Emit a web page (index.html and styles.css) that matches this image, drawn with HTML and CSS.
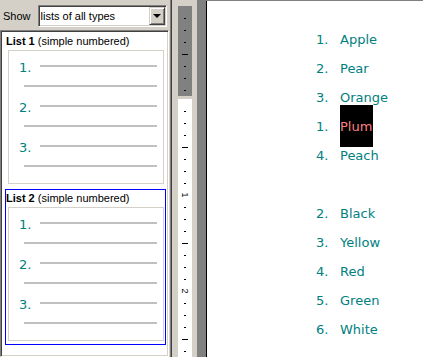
FILE: index.html
```html
<!DOCTYPE html>
<html lang="en">
<head>
    <meta charset="UTF-8">
    <meta name="viewport" content="width=device-width, initial-scale=1.0">
    <title>Lists</title>
    <link rel="stylesheet" href="styles.css">
</head>
<body>
    <div class="window">
        <div class="sidebar">
            <div class="toolbar">
                <span class="show-label">Show</span>
                <div class="select">
                    <span class="select-text">lists of all types</span>
                    <span class="select-btn"><span class="arrow"></span></span>
                </div>
            </div>
            <div class="panel">
                <div class="card">
                    <div class="card-title"><b>List 1</b> (simple numbered)</div>
                    <div class="preview">
                        <div class="row"><span class="num">1.</span><span class="line"></span></div>
                        <div class="row"><span class="line plain"></span></div>
                        <div class="row"><span class="num">2.</span><span class="line"></span></div>
                        <div class="row"><span class="line plain"></span></div>
                        <div class="row"><span class="num">3.</span><span class="line"></span></div>
                        <div class="row"><span class="line plain"></span></div>
                    </div>
                </div>
                <div class="card selected">
                    <div class="card-title"><b>List 2</b> (simple numbered)</div>
                    <div class="preview">
                        <div class="row"><span class="num">1.</span><span class="line"></span></div>
                        <div class="row"><span class="line plain"></span></div>
                        <div class="row"><span class="num">2.</span><span class="line"></span></div>
                        <div class="row"><span class="line plain"></span></div>
                        <div class="row"><span class="num">3.</span><span class="line"></span></div>
                        <div class="row"><span class="line plain"></span></div>
                    </div>
                </div>
            </div>
        </div>
        <div class="splitter"></div>
        <div class="ruler">
            <div class="ruler-margin">
                <div class="tick"><i></i></div>
                <div class="tick"><i></i></div>
                <div class="tick"><i></i></div>
                <div class="tick long"><i></i></div>
                <div class="tick"><i></i></div>
                <div class="tick"><i></i></div>
                <div class="tick"><i></i></div>
            </div>
            <div class="ruler-page">
                <div class="tick"><i></i></div>
                <div class="tick"><i></i></div>
                <div class="tick"><i></i></div>
                <div class="tick long"><i></i></div>
                <div class="tick"><i></i></div>
                <div class="tick"><i></i></div>
                <div class="tick"><i></i></div>
                <div class="tick label"><span>1</span></div>
                <div class="tick"><i></i></div>
                <div class="tick"><i></i></div>
                <div class="tick"><i></i></div>
                <div class="tick long"><i></i></div>
                <div class="tick"><i></i></div>
                <div class="tick"><i></i></div>
                <div class="tick"><i></i></div>
                <div class="tick label"><span>2</span></div>
                <div class="tick"><i></i></div>
                <div class="tick"><i></i></div>
                <div class="tick"><i></i></div>
                <div class="tick long"><i></i></div>
                <div class="tick"><i></i></div>
            </div>
        </div>
        <div class="gap"></div>
        <div class="view">
            <div class="doc">
                <div class="item"><span class="n">1.</span>Apple</div>
                <div class="item"><span class="n">2.</span>Pear</div>
                <div class="item"><span class="n">3.</span>Orange</div>
                <div class="item"><span class="n">1.</span><span class="hl">Plum</span></div>
                <div class="item"><span class="n">4.</span>Peach</div>
                <div class="item"></div>
                <div class="item"><span class="n">2.</span>Black</div>
                <div class="item"><span class="n">3.</span>Yellow</div>
                <div class="item"><span class="n">4.</span>Red</div>
                <div class="item"><span class="n">5.</span>Green</div>
                <div class="item"><span class="n">6.</span>White</div>
            </div>
        </div>
    </div>
</body>
</html>
```

FILE: styles.css
```css
body {
    margin: 0;
    background: #d4d0c8;
    font-family: "Liberation Sans", Arial, sans-serif;
    font-size: 11px;
    color: #000;
}
.window {
    display: flex;
    height: 357px;
    overflow: hidden;
}
.sidebar {
    width: 169px;
    display: flex;
    flex-direction: column;
}
.toolbar {
    height: 30px;
    box-sizing: border-box;
    padding-top: 5px;
    display: flex;
    align-items: flex-start;
}
.show-label {
    margin-left: 3px;
    line-height: 22px;
}
.select {
    margin-left: 7px;
    width: 129px;
    height: 22px;
    box-sizing: border-box;
    border: 1px solid;
    border-color: #808080 #fff #fff #808080;
    box-shadow: inset 1px 1px 0 #404040, inset -1px -1px 0 #d4d0c8;
    background: #fff;
    display: flex;
    padding: 1px 1px 1px 2px;
}
.select-text {
    flex: 1;
    line-height: 18px;
}
.select-btn {
    width: 16px;
    height: 18px;
    box-sizing: border-box;
    background: #d4d0c8;
    border: 1px solid;
    border-color: #d4d0c8 #404040 #404040 #d4d0c8;
    box-shadow: inset 1px 1px 0 #fff, inset -1px -1px 0 #808080;
    display: flex;
    align-items: center;
    justify-content: center;
}
.arrow {
    width: 0;
    height: 0;
    border-left: 4px solid transparent;
    border-right: 4px solid transparent;
    border-top: 4px solid #000;
}
.panel {
    flex: 1;
    background: #fff;
    border: 1px solid;
    border-color: #808080 #fff #fff #808080;
    box-shadow: inset 1px 1px 0 #404040, inset -1px -1px 0 #d4d0c8;
    padding: 1px 2px 0 4px;
}
.card {
    border: 1px solid #fff;
    padding-bottom: 3px;
    margin-bottom: 1px;
}
.card.selected {
    border-color: #0000ff;
}
.card-title {
    height: 17px;
    box-sizing: border-box;
    padding-top: 1px;
    line-height: 14px;
    white-space: nowrap;
}
.preview {
    border: 1px solid #d4d0c8;
    margin: 0 1px 0 2px;
    padding: 5px 6px 7px 0;
}
.row {
    height: 20px;
    display: flex;
    align-items: center;
}
.num {
    width: 21px;
    margin-left: 10px;
    height: 20px;
    box-sizing: border-box;
    padding-top: 4px;
    line-height: 16px;
    font-family: "DejaVu Sans", Verdana, sans-serif;
    font-size: 13px;
    color: #008080;
}
.line {
    flex: 1;
    height: 2px;
    background: #c0c0c0;
}
.line.plain {
    margin-left: 15px;
}
.splitter {
    width: 9px;
    box-shadow: inset 1px 0 0 #d4d0c8, inset 2px 0 0 #808080, inset 3px 0 0 #404040;
}
.ruler {
    width: 14px;
    padding-top: 6px;
    display: flex;
    flex-direction: column;
}
.ruler-margin {
    height: 93px;
    box-sizing: border-box;
    background: #808080;
    padding-top: 6px;
}
.ruler-page {
    flex: 1;
    margin-top: 3px;
    background: #fff;
    padding-top: 6px;
}
.tick {
    height: 12px;
    display: flex;
    justify-content: center;
    align-items: flex-start;
}
.tick i {
    display: block;
    width: 2px;
    height: 1px;
    margin-top: 6px;
    background: #000;
}
.tick.long i {
    width: 6px;
}
.tick.label span {
    display: block;
    margin-top: 1px;
    font-size: 9px;
    line-height: 10px;
    transform: rotate(90deg);
}
.gap {
    width: 5px;
}
.view {
    flex: 1;
    background: #808080;
    padding: 1px 0 0 9px;
    display: flex;
}
.doc {
    flex: 1;
    background: #fff;
    border-left: 1px solid #000;
    padding: 24px 0 0 109px;
    font-family: "DejaVu Sans", Verdana, sans-serif;
    font-size: 13px;
    color: #008080;
}
.item {
    height: 29px;
    line-height: 29px;
    white-space: nowrap;
}
.n {
    display: inline-block;
    width: 24px;
}
.hl {
    background: #000;
    color: #ff8080;
    padding: 14px 1px 13px 0;
}
```
